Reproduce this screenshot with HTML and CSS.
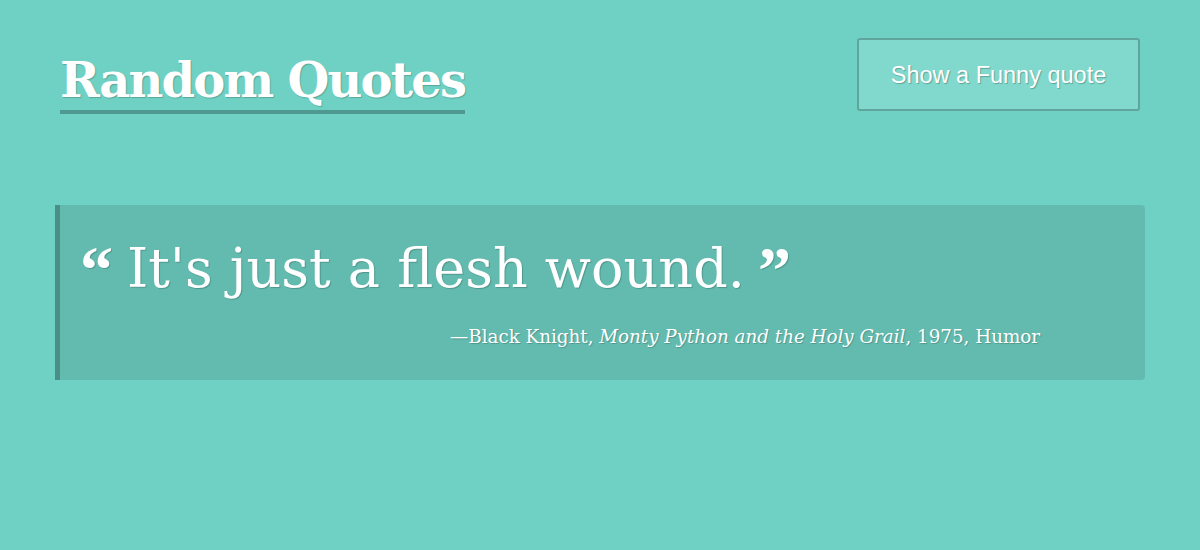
FILE: index.html
```html
<!DOCTYPE html>
<html lang="en">
<head>
<meta charset="utf-8">
<title>Random Quotes</title>
<link rel="stylesheet" href="styles.css">
</head>
<body>
<div class="page">
  <header class="header">
    <h1 class="title">Random Quotes</h1>
    <button class="btn" type="button">Show a Funny quote</button>
  </header>
  <blockquote class="quote">
    <p class="quote-text"><span class="mark">&ldquo;</span>It's just a flesh wound.<span class="mark mark-close">&rdquo;</span></p>
    <p class="cite">&mdash;Black Knight, <em>Monty Python and the Holy Grail</em>, 1975, Humor</p>
  </blockquote>
</div>
</body>
</html>
```
FILE: styles.css
```css
html, body {
  margin: 0;
  padding: 0;
  background: #6fd1c3;
  height: 100%;
}
body {
  font-family: "DejaVu Serif", "Liberation Serif", serif;
  color: #fff;
}
.page {
  width: 1090px;
  margin: 0 auto;
  padding-top: 38px;
}
.header {
  display: flex;
  justify-content: space-between;
  align-items: flex-start;
  padding: 0 5px;
}
.title {
  margin: 14px 0 0;
  font-size: 48px;
  font-weight: bold;
  line-height: 56px;
  letter-spacing: -1.8px;
  border-bottom: 4px solid #4f9990;
  padding-bottom: 2px;
  text-shadow: 1px 1px 1px rgba(0,0,0,0.2);
}
.btn {
  width: 283px;
  height: 73px;
  background: #80d9cc;
  border: 2px solid #5fa59b;
  border-radius: 3px;
  color: #fff;
  font-family: "Liberation Sans", Arial, sans-serif;
  font-size: 23.5px;
  padding: 2px 0 0;
  text-shadow: 1px 1px 1px rgba(0,0,0,0.25);
  cursor: pointer;
}
.quote {
  margin: 91px 0 0;
  background: #63bbaf;
  border-left: 5px solid #4a8f86;
  border-radius: 0 4px 4px 0;
  height: 175px;
  box-sizing: border-box;
  padding: 22px 20px 0 20px;
}
.quote-text {
  margin: 0;
  font-size: 54px;
  line-height: 84px;
  text-shadow: 1px 1px 1px rgba(0,0,0,0.2);
}
.mark {
  font-family: "Liberation Serif", serif;
  font-size: 66px;
  font-weight: bold;
  line-height: 1;
  vertical-align: -5px;
  margin-right: 14px;
}
.mark-close {
  margin-left: 13px;
  margin-right: 0;
}
.cite {
  margin: 15px 0 0;
  width: 960px;
  text-align: right;
  font-size: 18.3px;
  text-shadow: 1px 1px 1px rgba(0,0,0,0.2);
}
```
